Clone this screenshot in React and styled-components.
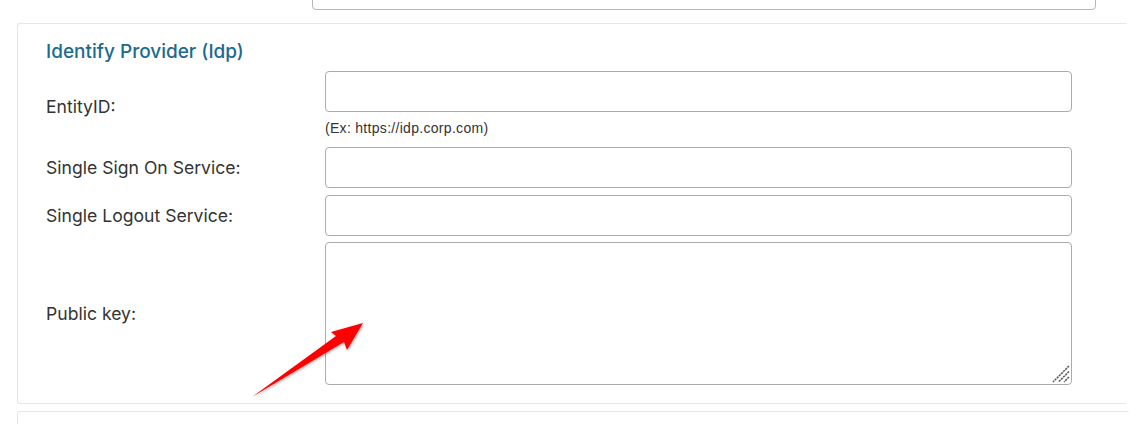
import React from 'react';
import styled, { createGlobalStyle } from 'styled-components';

const GlobalStyle = createGlobalStyle`
  html, body {
    margin: 0;
    padding: 0;
    background: #fff;
    overflow: hidden;
  }
  body {
    font-family: Inter, "Noto Sans", sans-serif;
    color: #333;
  }
`;

const Page = styled.div`
  position: relative;
  width: 1138px;
  height: 424px;
  overflow: hidden;
  padding-left: 17px;
  box-sizing: border-box;
`;

const PrevField = styled.div`
  margin: -24px 0 0 295px;
  width: 782px;
  height: 32px;
  border: 1px solid #b5b5b5;
  border-radius: 4px;
`;

const Panel = styled.section`
  margin-top: 13px;
  width: 1110px;
  box-sizing: border-box;
  border: 1px solid #e6e6e6;
  border-right-color: transparent;
  border-radius: 3px 0 0 3px;
  padding: 16px 0 18px 28px;
`;

const Title = styled.h3`
  margin: 0 0 7px;
  font-size: 19px;
  line-height: 24px;
  font-weight: 500;
  color: #1d6a8c;
`;

const Rows = styled.div`
  display: flex;
  flex-direction: column;
  gap: 7px;
`;

const Row = styled.div`
  display: grid;
  grid-template-columns: 279px 747px;
  align-items: center;
  margin-top: ${p => p.$tight ? '-1px' : '0'};
`;

const Label = styled.label`
  font-size: 17.6px;
  line-height: 22px;
  color: #333;
  padding-top: ${p => p.$offset || 0}px;
`;

const Field = styled.div`
  display: flex;
  flex-direction: column;
`;

const Input = styled.input`
  height: 41px;
  box-sizing: border-box;
  border: 1px solid #ababab;
  border-radius: 4px;
  padding: 0 10px;
  font: inherit;
  outline: none;
`;

const AreaWrap = styled.div`
  position: relative;
  display: flex;
`;

const TextArea = styled.textarea`
  flex: 1;
  height: 143px;
  box-sizing: border-box;
  border: 1px solid #ababab;
  border-radius: 4px;
  padding: 8px 10px;
  font: inherit;
  outline: none;
  resize: none;
`;

const Grip = styled.svg`
  position: absolute;
  right: 2px;
  bottom: 2px;
  pointer-events: none;
`;

const Hint = styled.div`
  margin: 8px 0 3px;
  font-family: "Liberation Sans", Arial, sans-serif;
  font-size: 14px;
  line-height: 17px;
  letter-spacing: 0.3px;
  color: #333;
`;

const NextPanel = styled.div`
  margin-top: 7px;
  width: 1110px;
  height: 40px;
  border: 1px solid #e6e6e6;
  border-right-color: transparent;
  border-radius: 3px 0 0 0;
`;

const Annotation = styled.svg`
  position: absolute;
  left: 0;
  top: 0;
  pointer-events: none;
`;

const Arrow = () => (
  <Annotation width="1138" height="424" viewBox="0 0 1138 424">
    <defs>
      <filter id="arrowShadow" x="-20%" y="-20%" width="140%" height="140%">
        <feDropShadow dx="1" dy="1" stdDeviation="1.6" floodColor="#000" floodOpacity="0.35" />
      </filter>
    </defs>
    <polygon
      points="252,397 336,336 331,332 363,323 347,350 344,342"
      fill="#ff0000"
      filter="url(#arrowShadow)"
    />
  </Annotation>
);

const ResizeGrip = () => (
  <Grip width="18" height="18" viewBox="0 0 18 18">
    <g stroke="#555" strokeWidth="1.5" strokeDasharray="2.2 0.8">
      <line x1="17" y1="1" x2="1" y2="17" />
      <line x1="17" y1="6.5" x2="6.5" y2="17" />
      <line x1="17" y1="12" x2="12" y2="17" />
    </g>
  </Grip>
);

const App = () => {
  return (
    <>
      <GlobalStyle />
      <Page>
        <PrevField />
        <Panel>
          <Title>Identify Provider (Idp)</Title>
          <Rows>
            <Row>
              <Label $offset={2}>EntityID:</Label>
              <Field>
                <Input type="text" />
                <Hint>(Ex: https://idp.corp.com)</Hint>
              </Field>
            </Row>
            <Row>
              <Label>Single Sign On Service:</Label>
              <Input type="text" />
            </Row>
            <Row>
              <Label>Single Logout Service:</Label>
              <Input type="text" />
            </Row>
            <Row $tight>
              <Label>Public key:</Label>
              <AreaWrap>
                <TextArea />
                <ResizeGrip />
              </AreaWrap>
            </Row>
          </Rows>
        </Panel>
        <NextPanel />
        <Arrow />
      </Page>
    </>
  );
};

export default App;
